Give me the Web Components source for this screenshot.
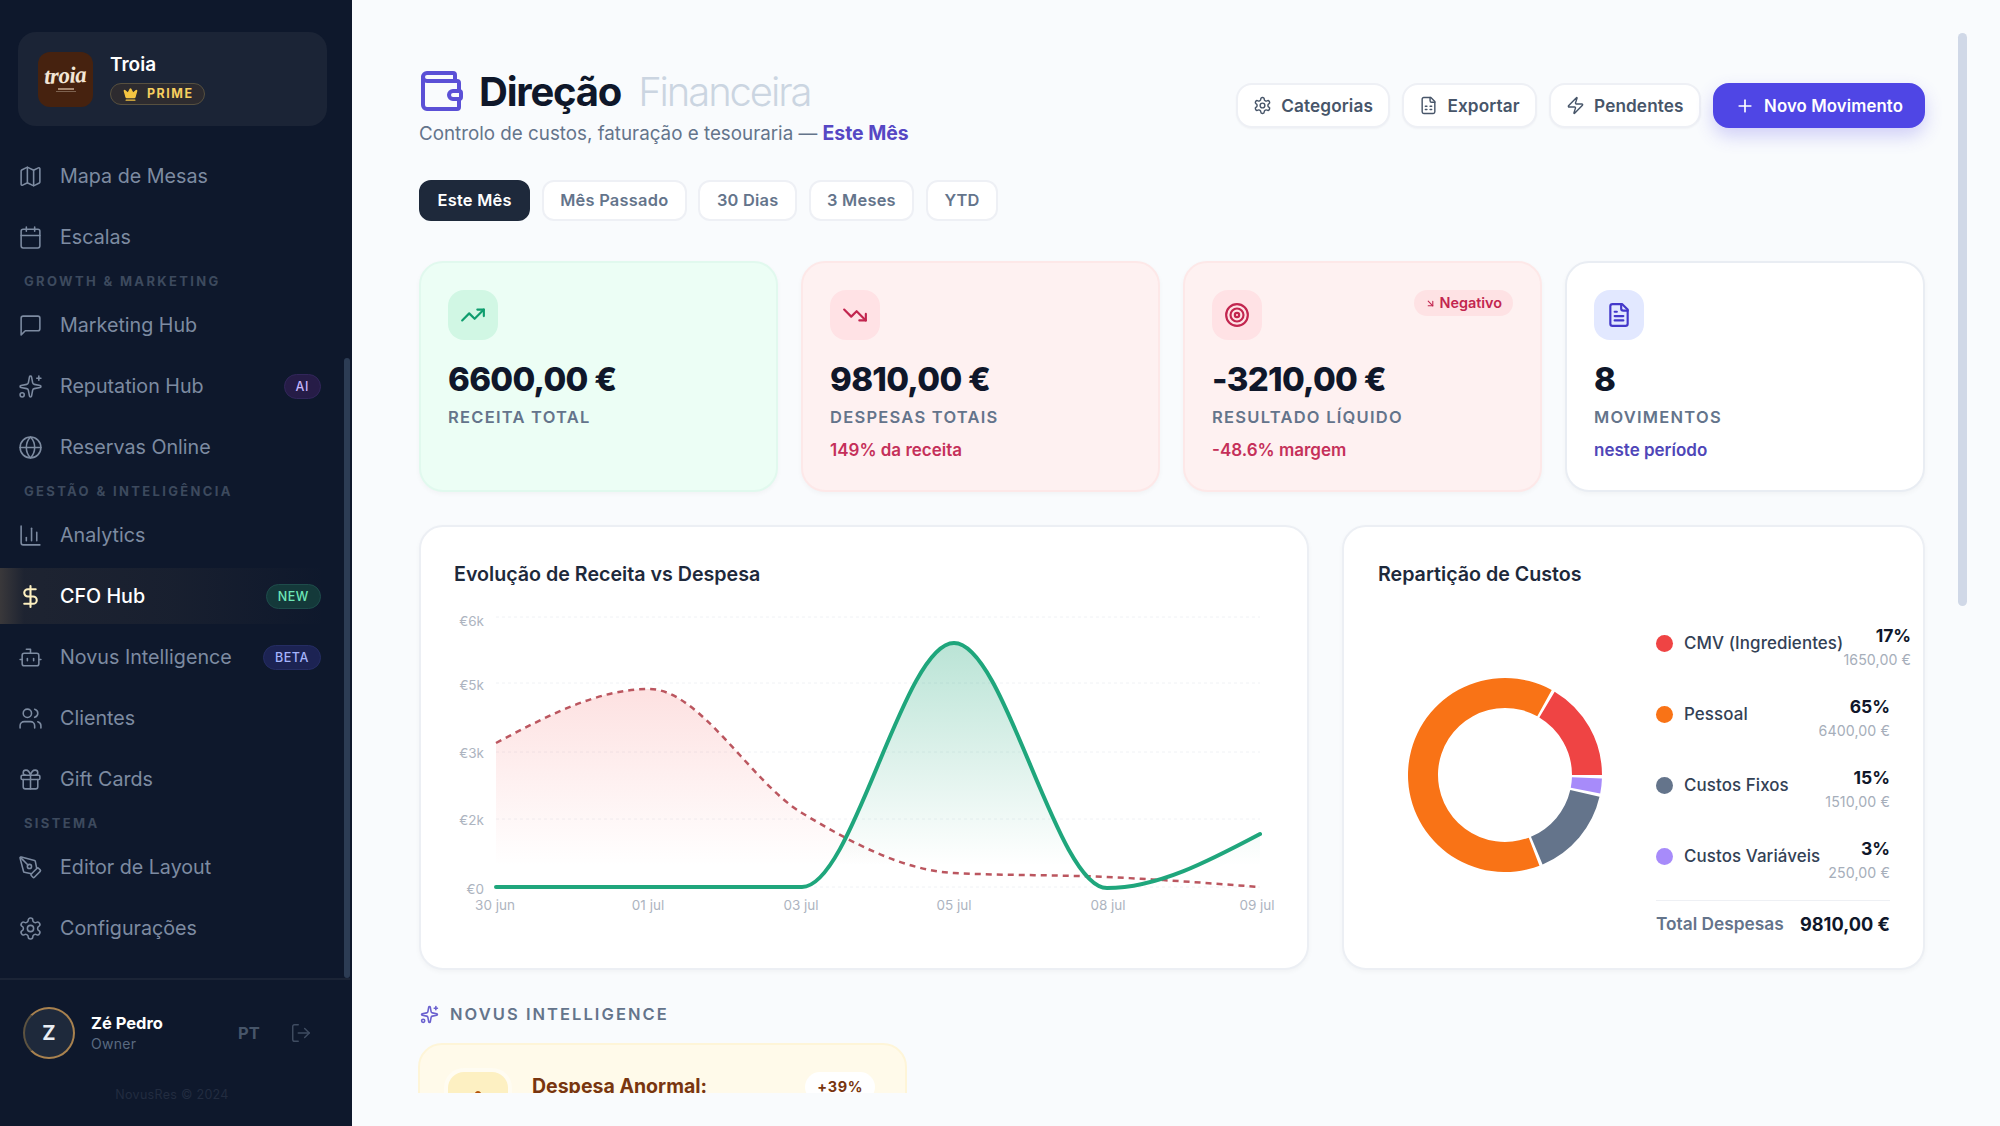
<!DOCTYPE html>
<html lang="pt">
<head>
<meta charset="utf-8">
<title>CFO Hub</title>
<style>
html,body{margin:0;padding:0;width:2000px;height:1126px;overflow:hidden;background:#f9fbfd;font-family:Inter,"Liberation Sans",sans-serif;}
</style>
</head>
<body>
<app-shell>
  <side-bar slot="side"></side-bar>
  <cfo-page slot="main"></cfo-page>
</app-shell>
<script>
const P = {
  map:'<path d="M14.106 5.553a2 2 0 0 0 1.788 0l3.659-1.83A1 1 0 0 1 21 4.619v12.764a1 1 0 0 1-.553.894l-4.553 2.277a2 2 0 0 1-1.788 0l-4.212-2.106a2 2 0 0 0-1.788 0l-3.659 1.83A1 1 0 0 1 3 19.381V6.618a1 1 0 0 1 .553-.894l4.553-2.277a2 2 0 0 1 1.788 0z"/><path d="M15 5.764v15"/><path d="M9 3.236v15"/>',
  calendar:'<path d="M8 2v4"/><path d="M16 2v4"/><rect width="18" height="18" x="3" y="4" rx="2"/><path d="M3 10h18"/>',
  message:'<path d="M21 15a2 2 0 0 1-2 2H7l-4 4V5a2 2 0 0 1 2-2h14a2 2 0 0 1 2 2z"/>',
  sparkles:'<path d="M11.017 2.814a1 1 0 0 1 1.966 0l1.051 5.558a2 2 0 0 0 1.594 1.594l5.558 1.051a1 1 0 0 1 0 1.966l-5.558 1.051a2 2 0 0 0-1.594 1.594l-1.051 5.558a1 1 0 0 1-1.966 0l-1.051-5.558a2 2 0 0 0-1.594-1.594l-5.558-1.051a1 1 0 0 1 0-1.966l5.558-1.051a2 2 0 0 0 1.594-1.594z"/><path d="M20 2v4"/><path d="M22 4h-4"/><circle cx="4" cy="20" r="2"/>',
  globe:'<circle cx="12" cy="12" r="10"/><path d="M12 2a14.5 14.5 0 0 0 0 20 14.5 14.5 0 0 0 0-20"/><path d="M2 12h20"/>',
  chart:'<path d="M3 3v16a2 2 0 0 0 2 2h16"/><path d="M18 17V9"/><path d="M13 17V5"/><path d="M8 17v-3"/>',
  dollar:'<line x1="12" x2="12" y1="2" y2="22"/><path d="M17 5H9.5a3.5 3.5 0 0 0 0 7h5a3.5 3.5 0 0 1 0 7H6"/>',
  bot:'<path d="M12 8V4H8"/><rect width="16" height="12" x="4" y="8" rx="2"/><path d="M2 14h2"/><path d="M20 14h2"/><path d="M15 13v2"/><path d="M9 13v2"/>',
  users:'<path d="M16 21v-2a4 4 0 0 0-4-4H6a4 4 0 0 0-4 4v2"/><circle cx="9" cy="7" r="4"/><path d="M22 21v-2a4 4 0 0 0-3-3.87"/><path d="M16 3.13a4 4 0 0 1 0 7.75"/>',
  gift:'<rect x="3" y="8" width="18" height="4" rx="1"/><path d="M12 8v13"/><path d="M19 12v7a2 2 0 0 1-2 2H7a2 2 0 0 1-2-2v-7"/><path d="M7.5 8a2.5 2.5 0 0 1 0-5A4.8 8 0 0 1 12 8a4.8 8 0 0 1 4.5-5 2.5 2.5 0 0 1 0 5"/>',
  pen:'<path d="M15.707 21.293a1 1 0 0 1-1.414 0l-1.586-1.586a1 1 0 0 1 0-1.414l5.586-5.586a1 1 0 0 1 1.414 0l1.586 1.586a1 1 0 0 1 0 1.414z"/><path d="m18 13-1.375-6.874a1 1 0 0 0-.746-.776L3.235 2.028a1 1 0 0 0-1.207 1.207L5.35 15.879a1 1 0 0 0 .776.746L13 18"/><path d="m2.3 2.3 7.286 7.286"/><circle cx="11" cy="11" r="2"/>',
  settings:'<path d="M12.22 2h-.44a2 2 0 0 0-2 2v.18a2 2 0 0 1-1 1.73l-.43.25a2 2 0 0 1-2 0l-.15-.08a2 2 0 0 0-2.73.73l-.22.38a2 2 0 0 0 .73 2.73l.15.1a2 2 0 0 1 1 1.72v.51a2 2 0 0 1-1 1.74l-.15.09a2 2 0 0 0-.73 2.73l.22.38a2 2 0 0 0 2.73.73l.15-.08a2 2 0 0 1 2 0l.43.25a2 2 0 0 1 1 1.73V20a2 2 0 0 0 2 2h.44a2 2 0 0 0 2-2v-.18a2 2 0 0 1 1-1.73l.43-.25a2 2 0 0 1 2 0l.15.08a2 2 0 0 0 2.73-.73l.22-.39a2 2 0 0 0-.73-2.73l-.15-.08a2 2 0 0 1-1-1.74v-.5a2 2 0 0 1 1-1.74l.15-.09a2 2 0 0 0 .73-2.73l-.22-.38a2 2 0 0 0-2.73-.73l-.15.08a2 2 0 0 1-2 0l-.43-.25a2 2 0 0 1-1-1.73V4a2 2 0 0 0-2-2z"/><circle cx="12" cy="12" r="3"/>',
  logout:'<path d="M9 21H5a2 2 0 0 1-2-2V5a2 2 0 0 1 2-2h4"/><polyline points="16 17 21 12 16 7"/><line x1="21" x2="9" y1="12" y2="12"/>',
  wallet:'<path d="M19 7V4a1 1 0 0 0-1-1H5a2 2 0 0 0 0 4h15a1 1 0 0 1 1 1v4h-3a2 2 0 0 0 0 4h3a1 1 0 0 0 1-1v-2a1 1 0 0 0-1-1"/><path d="M3 5v14a2 2 0 0 0 2 2h15a1 1 0 0 0 1-1v-4"/>',
  sheet:'<path d="M15 2H6a2 2 0 0 0-2 2v16a2 2 0 0 0 2 2h12a2 2 0 0 0 2-2V7Z"/><path d="M14 2v4a2 2 0 0 0 2 2h4"/><path d="M8 13h2"/><path d="M14 13h2"/><path d="M8 17h2"/><path d="M14 17h2"/>',
  zap:'<path d="M4 14a1 1 0 0 1-.78-1.63l9.9-10.2a.5.5 0 0 1 .86.46l-1.92 6.02A1 1 0 0 0 13 10h7a1 1 0 0 1 .78 1.63l-9.9 10.2a.5.5 0 0 1-.86-.46l1.92-6.02A1 1 0 0 0 11 14z"/>',
  plus:'<path d="M5 12h14"/><path d="M12 5v14"/>',
  up:'<path d="M16 7h6v6"/><path d="m22 7-8.5 8.5-5-5L2 17"/>',
  down:'<path d="M16 17h6v-6"/><path d="m22 17-8.5-8.5-5 5L2 7"/>',
  target:'<circle cx="12" cy="12" r="10"/><circle cx="12" cy="12" r="6"/><circle cx="12" cy="12" r="2"/>',
  file:'<path d="M15 2H6a2 2 0 0 0-2 2v16a2 2 0 0 0 2 2h12a2 2 0 0 0 2-2V7Z"/><path d="M14 2v4a2 2 0 0 0 2 2h4"/><path d="M10 9H8"/><path d="M16 13H8"/><path d="M16 17H8"/>',
  arrow:'<path d="m7 7 10 10"/><path d="M17 7v10H7"/>',
  alert:'<path d="m21.73 18-8-14a2 2 0 0 0-3.48 0l-8 14A2 2 0 0 0 4 21h16a2 2 0 0 0 1.73-3Z"/><path d="M12 9v4"/><path d="M12 17h.01"/>'
};
function ic(n,s,w){return `<svg xmlns="http://www.w3.org/2000/svg" width="${s}" height="${s}" viewBox="0 0 24 24" fill="none" stroke="currentColor" stroke-width="${w}" stroke-linecap="round" stroke-linejoin="round" style="display:block;flex:none">${P[n]}</svg>`;}

class AppShell extends HTMLElement{
  constructor(){super();this.attachShadow({mode:'open'}).innerHTML=`<style>
  :host{display:flex;width:2000px;height:1126px;position:relative;overflow:hidden}
  .thumb{position:absolute;left:1958px;top:33px;width:9px;height:573px;border-radius:5px;background:#d0d8e7}
  </style><slot name="side"></slot><slot name="main"></slot><div class="thumb"></div>`;}
}
customElements.define('app-shell',AppShell);

class NavItem extends HTMLElement{
  connectedCallback(){
    const i=this.getAttribute('icon'),b=this.getAttribute('badge'),k=this.getAttribute('kind')||'',a=this.hasAttribute('active');
    this.shadowRoot||this.attachShadow({mode:'open'});
    this.shadowRoot.innerHTML=`<style>
    :host{display:flex;align-items:center;height:56px;padding:0 23px 0 18px;color:#7d8ba1;font:400 19.7px/28px Inter,sans-serif}
    :host([active]){color:#fff;font-weight:500;background:linear-gradient(90deg,rgba(214,170,110,.22) 0,rgba(214,170,110,.08) 7%,rgba(214,170,110,.05) 50%,rgba(214,170,110,0) 95%)}
    .i{flex:none;width:25px;height:25px;margin-right:17px}
    :host([active]) .i{color:#fdf0c0}
    .t{flex:1}
    .b{flex:none;height:25px;box-sizing:border-box;border-radius:13px;border:1px solid;padding:0 11px;font:500 12.5px/23px Inter,sans-serif;letter-spacing:.6px}
    .ai{background:#261c47;border-color:#31265a;color:#c4b5fd}
    .new{background:#14393a;border-color:#1e4c4b;color:#6ee7b7}
    .beta{background:#1c2353;border-color:#252d63;color:#a5b4fc}
    </style><span class="i">${ic(i,25,a?2:1.5)}</span><span class="t"><slot></slot></span>${b?`<span class="b ${k}">${b}</span>`:''}`;
  }
}
customElements.define('nav-item',NavItem);

class NavLabel extends HTMLElement{
  constructor(){super();this.attachShadow({mode:'open'}).innerHTML=`<style>
  :host{display:block;height:22px;padding-left:24px;font:700 13px/22px Inter,sans-serif;letter-spacing:2.35px;color:#3d4a5e}
  </style><slot></slot>`;}
}
customElements.define('nav-label',NavLabel);

class SideBar extends HTMLElement{
  constructor(){super();this.attachShadow({mode:'open'}).innerHTML=`<style>
  :host{display:flex;flex-direction:column;flex:none;width:352px;height:1126px;background:#0e182c;position:relative;font-family:Inter,sans-serif}
  .brand{flex:none;margin:32px 25px 22px 18px;height:94px;border-radius:18px;background:#1b2436;display:flex;align-items:center;padding-left:20px;box-sizing:border-box}
  .logo{width:55px;height:55px;border-radius:12px;background:#46220f;display:flex;flex-direction:column;align-items:center;justify-content:center;color:#f3e6d6;flex:none}
  .logo b{font:italic 700 23px/20px "Liberation Serif",serif;letter-spacing:-.5px;transform:rotate(-3deg)}
  .logo i{display:block;width:16px;height:2px;background:#a98a72;margin-top:2px}
  .logo u{display:block;width:20px;height:1px;background:#7d6250;margin-top:1px}
  .who{margin-left:17px}
  .name{font:600 19px/24px Inter,sans-serif;color:#fff}
  .prime{margin-top:6px;display:flex;align-items:center;width:95px;height:22px;box-sizing:border-box;border:1px solid #57503f;border-radius:11px;background:#2d2b2f;padding-left:12px;color:#f6cf5f;font:700 12.5px/20px Inter,sans-serif;letter-spacing:1.5px}
  .prime svg{margin-right:9px}
  nav{flex:none;height:830px;margin-top:0;display:flex;flex-direction:column;gap:5px;margin-right:8px;box-sizing:border-box;overflow:hidden}
  .thumb{position:absolute;left:344px;top:358px;width:6px;height:620px;border-radius:3px;background:#2c3c54}
  footer{flex:none;border-top:2px solid #1b2436;margin-top:0;margin-right:2px;height:146px;box-sizing:border-box;position:relative}
  .row{display:flex;align-items:center;padding:27px 0 0 23px}
  .av{flex:none;width:52px;height:52px;box-sizing:border-box;border-radius:50%;background:#1e293b;border:2px solid #a9824f;border-left-color:#5d5340;color:#e8edf4;font:700 20px/48px Inter,sans-serif;text-align:center}
  .u{margin-left:16px;width:147px}
  .un{font:700 16.5px/22px Inter,sans-serif;color:#fff}
  .ur{font:400 14px/20px Inter,sans-serif;color:#5a6a80;letter-spacing:.3px}
  .pt{font:700 16.5px/22px Inter,sans-serif;color:#475569;width:52px}
  .lo{color:#3f4c61}
  .c{text-align:center;margin-top:28px;font:400 12.5px/16px Inter,sans-serif;color:#222c40;letter-spacing:.3px;padding-right:6px}
  </style>
  <div class="brand"><div class="logo"><b>troia</b><i></i><u></u></div>
    <div class="who"><div class="name">Troia</div>
    <div class="prime"><svg width="15" height="15" viewBox="0 0 24 24" fill="#f5c542" stroke="#f5c542" stroke-width="2" stroke-linejoin="round" stroke-linecap="round">
    <path d="M11.562 3.266a.5.5 0 0 1 .876 0L15.39 8.87a1 1 0 0 0 1.516.294L21.183 5.5a.5.5 0 0 1 .798.519l-2.834 10.246a1 1 0 0 1-.956.734H5.81a1 1 0 0 1-.957-.734L2.02 6.02a.5.5 0 0 1 .798-.519l4.276 3.664a1 1 0 0 0 1.516-.294z"/><path d="M5 21h14"/></svg>PRIME</div></div></div>
  <nav>
    <nav-item icon="map">Mapa de Mesas</nav-item>
    <nav-item icon="calendar">Escalas</nav-item>
    <nav-label>GROWTH &amp; MARKETING</nav-label>
    <nav-item icon="message">Marketing Hub</nav-item>
    <nav-item icon="sparkles" badge="AI" kind="ai">Reputation Hub</nav-item>
    <nav-item icon="globe">Reservas Online</nav-item>
    <nav-label>GESTÃO &amp; INTELIGÊNCIA</nav-label>
    <nav-item icon="chart">Analytics</nav-item>
    <nav-item icon="dollar" active badge="NEW" kind="new">CFO Hub</nav-item>
    <nav-item icon="bot" badge="BETA" kind="beta">Novus Intelligence</nav-item>
    <nav-item icon="users">Clientes</nav-item>
    <nav-item icon="gift">Gift Cards</nav-item>
    <nav-label>SISTEMA</nav-label>
    <nav-item icon="pen">Editor de Layout</nav-item>
    <nav-item icon="settings">Configurações</nav-item>
  </nav>
  <div class="thumb"></div>
  <footer><div class="row"><div class="av">Z</div><div class="u"><div class="un">Zé Pedro</div><div class="ur">Owner</div></div><div class="pt">PT</div><span class="lo">${ic('logout',22,1.6)}</span></div>
  <div class="c">NovusRes © 2024</div></footer>`;}
}
customElements.define('side-bar',SideBar);

class ActBtn extends HTMLElement{
  connectedCallback(){
    this.shadowRoot||this.attachShadow({mode:'open'});
    const n=this.getAttribute('icon');
    this.shadowRoot.innerHTML=`<style>
    :host{display:flex;align-items:center;height:45px;box-sizing:border-box;border:2px solid #eef0f5;border-radius:16px;background:#fff;padding:0 15.5px 0 15.5px;color:#475569;font:600 17.2px/24px Inter,sans-serif;letter-spacing:.1px;box-shadow:0 1px 2px rgba(15,23,42,.04)}
    :host([primary]){background:#4f46e5;border-color:#4f46e5;color:#fff;box-shadow:0 8px 18px rgba(79,70,229,.24);padding:0 20px 0 20.5px;font-size:16.8px}
    span{margin-right:9px}
    </style><span>${ic(n,this.hasAttribute('primary')?20:19,this.hasAttribute('primary')?2:1.8)}</span><slot></slot>`;
  }
}
customElements.define('act-btn',ActBtn);

class RangeTab extends HTMLElement{
  constructor(){super();this.attachShadow({mode:'open'}).innerHTML=`<style>
  :host{display:block;height:41px;box-sizing:border-box;border:2px solid #eef0f5;border-radius:12px;background:#fff;padding:0 16.5px;color:#64748b;font:600 16.4px/37px Inter,sans-serif;letter-spacing:.25px}
  :host([on]){background:#1e293b;border-color:#1e293b;color:#fff}
  </style><slot></slot>`;}
}
customElements.define('range-tab',RangeTab);

class KpiCard extends HTMLElement{
  connectedCallback(){
    this.shadowRoot||this.attachShadow({mode:'open'});
    const t=this.getAttribute('tone'),n=this.getAttribute('icon'),s=this.getAttribute('sub'),f=this.getAttribute('flag');
    const C={green:['#ecfef5','#e1f9ee','#d1f7e4','#0f9d6e',''],red:['#fef1f1','#fde8e8','#ffe2e5','#c2264f','#c5305a'],white:['#fff','#e9edf3','#e2e8ff','#4338ca','#4f46b8']}[t];
    this.shadowRoot.innerHTML=`<style>
    :host{display:block;height:231px;box-sizing:border-box;padding:27px;border:2px solid ${C[1]};border-radius:24px;background:${C[0]};box-shadow:0 2px 5px rgba(15,23,42,.035);font-family:Inter,sans-serif}
    .top{display:flex;justify-content:space-between;align-items:flex-start;height:50px}
    .ic{width:50px;height:50px;border-radius:16px;background:${C[2]};color:${C[3]};display:flex;align-items:center;justify-content:center}
    .flag{display:flex;align-items:center;height:26px;border-radius:13px;background:#fee2e4;color:#c2264f;font:600 14.4px/26px Inter,sans-serif;padding:0 11px;gap:4px}
    .v{margin-top:21px;font:800 33px/36px Inter,sans-serif;letter-spacing:-.7px;color:#0f172a}
    .l{margin-top:8px;font:600 16.5px/24px Inter,sans-serif;letter-spacing:1.25px;color:#64748b}
    .s{margin-top:9px;font:600 17px/24px Inter,sans-serif;color:${C[4]}}
    </style><div class="top"><div class="ic">${ic(n,26,2)}</div>${f?`<div class="flag">${ic('arrow',11,2.4)}${f}</div>`:''}</div>
    <div class="v"><slot></slot></div><div class="l">${this.getAttribute('label')}</div>${s?`<div class="s">${s}</div>`:''}`;
  }
}
customElements.define('kpi-card',KpiCard);

class PanelCard extends HTMLElement{
  constructor(){super();this.attachShadow({mode:'open'}).innerHTML=`<style>
  :host{display:block;height:445px;box-sizing:border-box;border:2px solid #eceff4;border-radius:24px;background:#fff;box-shadow:0 2px 5px rgba(15,23,42,.035);overflow:hidden}
  h3{margin:0;padding:33px 0 0 var(--pad,33px);font:600 19.65px/28px Inter,sans-serif;color:#1e293b;letter-spacing:0}
  </style><h3 part="t"></h3><slot></slot>`;}
  connectedCallback(){this.shadowRoot.querySelector('h3').textContent=this.getAttribute('heading');}
}
customElements.define('panel-card',PanelCard);

function mono(pts){
  const n=pts.length,d=[],m=[];
  for(let i=0;i<n-1;i++){d[i]=(pts[i+1][1]-pts[i][1])/(pts[i+1][0]-pts[i][0]);}
  const sign=v=>v<0?-1:1;
  for(let i=1;i<n-1;i++){
    const h0=pts[i][0]-pts[i-1][0],h1=pts[i+1][0]-pts[i][0],s0=d[i-1],s1=d[i];
    const p=(s0*h1+s1*h0)/(h0+h1);
    m[i]=(sign(s0)+sign(s1))*Math.min(Math.abs(s0),Math.abs(s1),.5*Math.abs(p))||0;
  }
  m[0]=(3*d[0]-m[1])/2;m[n-1]=(3*d[n-2]-m[n-2])/2;
  if(Math.abs(d[0])<1e-6)m[0]=0;
  let s=`M${pts[0][0]},${pts[0][1]}`;
  for(let i=0;i<n-1;i++){
    const h=(pts[i+1][0]-pts[i][0])/3;
    s+=`C${pts[i][0]+h},${pts[i][1]+m[i]*h} ${pts[i+1][0]-h},${pts[i+1][1]-m[i+1]*h} ${pts[i+1][0]},${pts[i+1][1]}`;
  }
  return s;
}

class TrendChart extends HTMLElement{
  constructor(){super();
    const xs=[496,649,802,954,1107,1260];
    const exp=[743,689,813,873,877,887].map((y,i)=>[xs[i],y]);
    const rev=[887,887,887,643,888,834].map((y,i)=>[xs[i],y]);
    const grid=[617,683,752,819,887].map(y=>`<line x1="496" x2="1260" y1="${y}" y2="${y}" stroke="#f0f2f5" stroke-dasharray="3 3"/>`).join('');
    const yl=[['€6k',621],['€5k',685],['€3k',753],['€2k',820],['€0',889]].map(a=>`<text x="484" y="${a[1]+4.5}" text-anchor="end">${a[0]}</text>`).join('');
    const xl=[['30 jun',495],['01 jul',648],['03 jul',801],['05 jul',954],['08 jul',1108],['09 jul',1257]].map(a=>`<text x="${a[1]}" y="909.5" text-anchor="middle">${a[0]}</text>`).join('');
    const pe=mono(exp),pr=mono(rev);
    this.attachShadow({mode:'open'}).innerHTML=`<style>
    :host{display:block;margin-top:12px}
    svg{display:block}
    text{font:400 13.5px Inter,sans-serif;fill:#adb4c0}
    </style>
    <svg width="886" height="330" viewBox="421 600 886 330">
    <defs>
    <linearGradient id="ge" gradientUnits="userSpaceOnUse" x1="0" x2="0" y1="695" y2="866"><stop offset="0" stop-color="#f44a4a" stop-opacity=".16"/><stop offset="1" stop-color="#f44a4a" stop-opacity="0"/></linearGradient>
    <linearGradient id="gr" gradientUnits="userSpaceOnUse" x1="0" x2="0" y1="650" y2="866"><stop offset="0" stop-color="#10a070" stop-opacity=".28"/><stop offset="1" stop-color="#10a070" stop-opacity="0"/></linearGradient>
    </defs>
    ${grid}
    <path d="${pe}L1260,887L496,887Z" fill="url(#ge)"/>
    <path d="${pr}L1260,887L496,887Z" fill="url(#gr)"/>
    <path d="${pe}" fill="none" stroke="#bb565f" stroke-width="2.5" stroke-dasharray="6 5"/>
    <path d="${pr}" fill="none" stroke="#1fa67c" stroke-width="4" stroke-linecap="round"/>
    ${yl}${xl}</svg>`;
  }
}
customElements.define('trend-chart',TrendChart);

class CostDonut extends HTMLElement{
  constructor(){super();
    const cx=100,cy=100,R=97,r=67,segs=[[0,59.2,'#ef4444'],[61.2,290.8,'#f97316'],[292.8,347,'#64748b'],[349,358,'#a78bfa']];
    const pt=(a,q)=>[(cx+q*Math.cos(a*Math.PI/180)).toFixed(2),(cy-q*Math.sin(a*Math.PI/180)).toFixed(2)];
    const paths=segs.map(s=>{
      const la=(s[1]-s[0])>180?1:0,[a,b]=pt(s[0],R),[c,d]=pt(s[1],R),[e,f]=pt(s[1],r),[g,h]=pt(s[0],r);
      return `<path d="M${a},${b}A${R},${R} 0 ${la} 0 ${c},${d}L${e},${f}A${r},${r} 0 ${la} 1 ${g},${h}Z" fill="${s[2]}"/>`;
    }).join('');
    this.attachShadow({mode:'open'}).innerHTML=`<style>:host{display:block;flex:none;width:200px;height:200px}svg{display:block}</style><svg width="200" height="200" viewBox="0 0 200 200">${paths}</svg>`;
  }
}
customElements.define('cost-donut',CostDonut);

class LegendRow extends HTMLElement{
  connectedCallback(){
    this.shadowRoot||this.attachShadow({mode:'open'});
    this.shadowRoot.innerHTML=`<style>
    :host{display:flex;height:48px;width:234px;font-family:Inter,sans-serif;white-space:nowrap}
    .d{flex:none;width:17px;height:17px;border-radius:50%;margin-top:11px;margin-right:11px;background:${this.getAttribute('color')}}
    .n{flex:1 0 auto;font:500 16.9px/24px Inter,sans-serif;color:#334155;margin-top:7px;letter-spacing:.1px}
    .v{flex:none;text-align:right}
    .p{font:700 17.5px/24px Inter,sans-serif;color:#0f172a}
    .a{font:400 14.2px/24px Inter,sans-serif;letter-spacing:.1px;color:#a6aeba}
    </style><span class="d"></span><span class="n"><slot></slot></span><span class="v"><div class="p">${this.getAttribute('pct')}</div><div class="a">${this.getAttribute('amt')}</div></span>`;
  }
}
customElements.define('legend-row',LegendRow);

class CfoPage extends HTMLElement{
  constructor(){super();this.attachShadow({mode:'open'}).innerHTML=`<style>
  :host{display:block;flex:none;width:1648px;height:1093px;overflow:hidden;box-sizing:border-box;padding:66px 75px 0 67px;font-family:Inter,sans-serif}
  header{display:flex;justify-content:space-between;height:82px}
  h1{margin:0;display:flex;align-items:center;height:50px;font:700 40px/50px Inter,sans-serif;letter-spacing:-1.2px;color:#0f172a}
  h1 .ic{color:#5b50d6;width:48px;height:48px;margin-left:-2px;margin-right:14px}
  h1 .tx{padding-top:2px}
  h1 em{font-style:normal;font-weight:300;color:#cbd5e1;margin-left:17px;letter-spacing:-2.1px;padding-top:2px}
  .sub{font:400 18.8px/34px Inter,sans-serif;color:#64748b}
  .sub b{font-weight:700;font-size:19.4px;color:#5647c4}
  .acts{display:flex;gap:11.5px;margin-top:17px;height:45px}
  .tabs{display:flex;gap:11.5px;margin-top:32px}
  .kpis{display:grid;grid-template-columns:359px 359px 359px 360px;gap:23px;margin-top:40px}
  .row{display:grid;grid-template-columns:890px 583px;gap:33px;margin-top:33px;width:1506px}
  .row panel-card:last-child{--pad:34px}
  .body{display:flex;align-items:flex-start;padding-left:61px;margin-top:36px}
  cost-donut{margin-top:51px}
  .leg{margin-left:51px;width:234px;flex:none;display:flex;flex-direction:column;gap:23px}
  .tot{display:flex;justify-content:space-between;border-top:1px solid #eef0f4;margin-top:-8px;padding-top:11px;font:600 17.3px/24px Inter,sans-serif;color:#64748b;white-space:nowrap}
  .tot b{font-weight:700;color:#0f172a;font-size:18.2px}
  .nv{display:flex;align-items:center;height:20px;margin-top:34px;color:#64748b;font:600 16.5px/20px Inter,sans-serif;letter-spacing:2.05px}
  .nv span{color:#6a60cf;margin-right:11px;margin-left:1px}
  .ins{margin-top:19px;width:489px;height:120px;box-sizing:border-box;margin-left:-1px;border:2px solid #fef5d8;border-radius:24px;background:#fffaea;padding:27px 30px 0 28px;display:flex;align-items:flex-start}
  .ii{flex:none;width:60px;height:60px;border-radius:16px;background:#fdf0c2;color:#b45309;display:flex;align-items:center;justify-content:center;box-shadow:0 0 0 4px #fffcf2}
  .it{flex:1;margin-left:24px;font:700 19.5px/28px Inter,sans-serif;color:#78350f;margin-top:0}
  .ib{flex:none;height:30px;border-radius:15px;background:#fff;padding:0 12px;font:700 14.5px/30px Inter,sans-serif;letter-spacing:.6px;color:#78350f}
  </style>
  <header>
    <div>
      <h1><span class="ic">${ic('wallet',48,2)}</span><span class="tx">Direção</span><em>Financeira</em></h1>
      <div class="sub">Controlo de custos, faturação e tesouraria — <b>Este Mês</b></div>
    </div>
    <div class="acts">
      <act-btn icon="settings">Categorias</act-btn>
      <act-btn icon="sheet">Exportar</act-btn>
      <act-btn icon="zap">Pendentes</act-btn>
      <act-btn icon="plus" primary>Novo Movimento</act-btn>
    </div>
  </header>
  <div class="tabs"><range-tab on>Este Mês</range-tab><range-tab>Mês Passado</range-tab><range-tab>30 Dias</range-tab><range-tab>3 Meses</range-tab><range-tab>YTD</range-tab></div>
  <div class="kpis">
    <kpi-card tone="green" icon="up" label="RECEITA TOTAL">6600,00 €</kpi-card>
    <kpi-card tone="red" icon="down" label="DESPESAS TOTAIS" sub="149% da receita">9810,00 €</kpi-card>
    <kpi-card tone="red" icon="target" label="RESULTADO LÍQUIDO" sub="-48.6% margem" flag="Negativo">-3210,00 €</kpi-card>
    <kpi-card tone="white" icon="file" label="MOVIMENTOS" sub="neste período">8</kpi-card>
  </div>
  <div class="row">
    <panel-card heading="Evolução de Receita vs Despesa"><trend-chart></trend-chart></panel-card>
    <panel-card heading="Repartição de Custos">
      <div class="body"><cost-donut></cost-donut>
        <div class="leg">
          <legend-row color="#ef4444" pct="17%" amt="1650,00 €">CMV (Ingredientes)</legend-row>
          <legend-row color="#f97316" pct="65%" amt="6400,00 €">Pessoal</legend-row>
          <legend-row color="#64748b" pct="15%" amt="1510,00 €">Custos Fixos</legend-row>
          <legend-row color="#a78bfa" pct="3%" amt="250,00 €">Custos Variáveis</legend-row>
          <div class="tot"><span>Total Despesas</span><b>9810,00 €</b></div>
        </div>
      </div>
    </panel-card>
  </div>
  <div class="nv"><span>${ic('sparkles',19,2)}</span>NOVUS INTELLIGENCE</div>
  <div class="ins"><div class="ii">${ic('alert',26,2.2)}</div><div class="it">Despesa Anormal:</div><div class="ib">+39%</div></div>`;}
}
customElements.define('cfo-page',CfoPage);
</script>
</body>
</html>
